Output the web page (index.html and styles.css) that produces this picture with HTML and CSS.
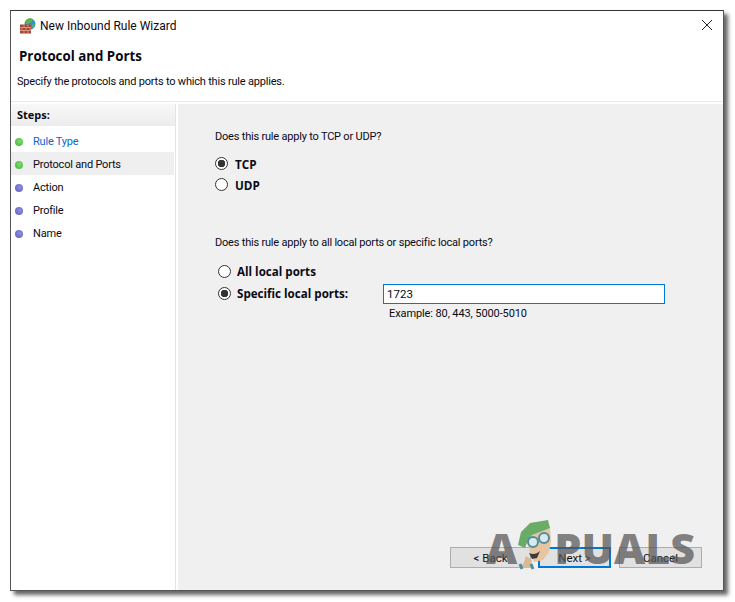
FILE: index.html
```html
<!DOCTYPE html>
<html lang="en">

<head>
    <meta charset="UTF-8">
    <title>New Inbound Rule Wizard</title>
    <link rel="stylesheet" href="styles.css">
</head>

<body>
    <div class="window">
        <div class="titlebar">
            <svg class="app-icon" width="16" height="16" viewBox="0 0 16 16">
                <circle cx="10" cy="6" r="5.500" fill="#2f8fd8" />
                <path d="M6 2c2-2 5-2 7-1l-1 3-3 1-1 2-2-1z" fill="#5fb548" />
                <path d="M12 7l3-1-1 3-2 1z" fill="#5fb548" />
                <rect x="0" y="6.500" width="11" height="9" fill="#a8442f" />
                <path d="M0 9.500h11M0 12.500h11M4 6.500v3M8 6.500v3M2 9.500v3M6 9.500v3M10 9.500v3M4 12.500v3M8 12.500v3" stroke="#dba794" stroke-width="0.800" fill="none" />
            </svg>
            <span class="title">New Inbound Rule Wizard</span>
            <svg class="close" width="12" height="12" viewBox="0 0 12 12">
                <path d="M1 1l10 10M11 1L1 11" stroke="#222" stroke-width="1" fill="none" />
            </svg>
        </div>
        <div class="header">
            <h1>Protocol and Ports</h1>
            <p>Specify the protocols and ports to which this rule applies.</p>
        </div>
        <div class="main">
            <div class="steps">
                <div class="steps-head">Steps:</div>
                <ul>
                    <li class="done link"><i></i>Rule Type</li>
                    <li class="done current"><i></i>Protocol and Ports</li>
                    <li><i></i>Action</li>
                    <li><i></i>Profile</li>
                    <li><i></i>Name</li>
                </ul>
            </div>
            <div class="content">
                <p class="question">Does this rule apply to TCP or UDP?</p>
                <div class="radio-group proto">
                    <div class="radio on"><i></i>TCP</div>
                    <div class="radio"><i></i>UDP</div>
                </div>
                <p class="question second">Does this rule apply to all local ports or specific local ports?</p>
                <div class="radio-group ports">
                    <div class="radio"><i></i>All local ports</div>
                    <div class="radio on"><i></i><span class="radio-label">Specific local ports:</span>
                        <div class="port-input">1723</div>
                    </div>
                </div>
                <p class="example">Example: 80, 443, 5000-5010</p>
                <div class="buttons">
                    <button class="btn-back">&lt; Back</button>
                    <button class="btn-next">Next &gt;</button>
                    <button class="btn-cancel">Cancel</button>
                </div>
            </div>
        </div>
        <div class="watermark">
            <span>A</span>
            <svg class="mascot" width="38" height="50" viewBox="0 0 38 50">
                <path d="M13 20l4-5 8-3 10-4 1 14-2 10-6 8-9 2-4-8z" fill="#e6c5a0" />
                <path d="M3 25L6 12 15 3 33 0l2 8-10 4-8 3-4 5-3 8z" fill="#6bab68" />
                <circle cx="18" cy="22" r="5" fill="#dce9ec" stroke="#4f8d9e" stroke-width="2" />
                <circle cx="29" cy="18" r="5" fill="#dce9ec" stroke="#4f8d9e" stroke-width="2" />
                <path d="M14 33c4 2 8 1 11-2l-3 7-5 1z" fill="#3b3b3b" />
                <path d="M11 36l6 4-1 8H6l3-6z" fill="#d8b994" />
                <path d="M5 44l2 5M16 44l2 5" stroke="#4f8d9e" stroke-width="3" fill="none" />
            </svg>
            <span>PUALS</span>
        </div>
    </div>
</body>

</html>
```

FILE: styles.css
```css
html,
body {
    margin: 0;
    padding: 0;
    height: 100%;
    background-color: white;
    overflow: hidden;
}

body {
    padding: 10px 0 0 10px;
    box-sizing: border-box;
    font-family: Roboto, sans-serif;
    font-size: 11px;
    letter-spacing: -0.2px;
    color: #0a0a14;
}

.window {
    position: relative;
    width: 714px;
    height: 581px;
    box-sizing: border-box;
    border: 1px solid #555;
    border-top-color: #333;
    background-color: white;
    box-shadow: 4px 4px 4px #666;
    display: flex;
    flex-direction: column;
}

.titlebar {
    height: 29px;
    display: flex;
    align-items: center;
    padding: 0 9px;
    box-sizing: border-box;
    gap: 4px;
    flex-shrink: 0;
}

.title {
    font-size: 12px;
    letter-spacing: 0;
    flex: 1;
}

.close {
    margin-right: 1px;
    margin-top: -2px;
}

.header {
    height: 62px;
    box-sizing: border-box;
    flex-shrink: 0;
    border-bottom: 1px solid #e8e8e8;
    padding: 7px 0 0 6px;
}

.header h1 {
    margin: 0 0 0 2px;
    font-family: "Open Sans", sans-serif;
    font-size: 13.3px;
    letter-spacing: 0;
    font-weight: bold;
    line-height: 18px;
}

.header p {
    margin: 9px 0 0;
    line-height: 16px;
}

.main {
    flex: 1;
    display: flex;
    padding-top: 2px;
    min-height: 0;
}

.steps {
    width: 164px;
    flex-shrink: 0;
    border-right: 1px solid #e4e4e4;
    margin-right: 2px;
}

.steps-head {
    height: 22px;
    line-height: 22px;
    padding-left: 6px;
    font-family: "Open Sans", sans-serif;
    font-size: 11px;
    letter-spacing: 0;
    font-weight: bold;
    background: linear-gradient(#f8f8f8, #ececec);
}

.steps ul {
    list-style: none;
    margin: 3px 0 0;
    padding: 0;
}

.steps li {
    height: 23px;
    box-sizing: border-box;
    display: flex;
    align-items: center;
    padding: 2px 0 0 4px;
    gap: 10px;
}

.steps li i {
    width: 8px;
    height: 8px;
    border-radius: 50%;
    background: radial-gradient(circle at 60% 40%, #8f8fe0, #5a5ab8);
}

.steps li.done i {
    background: radial-gradient(circle at 60% 40%, #7fdc6f, #3fae3a);
}

.steps li.link {
    color: #0a66d0;
}

.steps li.current {
    background-color: #efefef;
    margin-right: 1px;
}

.content {
    position: relative;
    flex: 1;
    background-color: #f0f0f0;
    padding: 25px 0 0 37px;
}

.question {
    margin: 0;
    line-height: 16px;
}

.radio-group {
    margin-top: 9px;
    display: flex;
    flex-direction: column;
}

.radio {
    height: 22px;
    display: flex;
    align-items: center;
    gap: 7px;
    font-family: "Open Sans", sans-serif;
    font-size: 11.7px;
    letter-spacing: 0;
    font-weight: bold;
}

.proto {
    margin-top: 8px;
}

.proto .radio {
    height: 21px;
}

.radio i {
    width: 11px;
    height: 11px;
    border: 1px solid #333;
    border-radius: 50%;
    background-color: white;
    flex-shrink: 0;
}

.radio.on i {
    background: radial-gradient(circle, #333 0, #333 3.5px, white 4px);
}

.question.second {
    margin-top: 40px;
}

.ports {
    margin-left: 3px;
}

.ports .radio {
    gap: 6px;
    font-size: 11.6px;
}

.radio-label {
    width: 147px;
}

.port-input {
    width: 277px;
    height: 18px;
    line-height: 18px;
    padding-left: 3px;
    border: 1px solid #0078d7;
    background-color: white;
    font-family: Roboto, sans-serif;
    font-size: 11.5px;
    font-weight: normal;
    margin: 1px 0 0 -7px;
}

.example {
    margin: 2px 0 0 174px;
    line-height: 16px;
    letter-spacing: -0.1px;
}

.buttons {
    position: absolute;
    right: 21px;
    bottom: 22px;
    display: flex;
}

.buttons button {
    height: 21px;
    box-sizing: border-box;
    font-family: inherit;
    font-size: 11.5px;
    letter-spacing: 0;
    color: #111;
    background-color: #e1e1e1;
    border: 1px solid #adadad;
    padding: 0;
}

.btn-back {
    width: 81px;
    margin-right: 7px;
}

.btn-next {
    width: 73px;
    margin-right: 8px;
    border: 2px solid #0078d7 !important;
}

.btn-cancel {
    width: 83px;
}

.watermark {
    position: absolute;
    left: 475px;
    top: 509px;
    height: 50px;
    display: flex;
    align-items: flex-end;
    font-family: "Open Sans", sans-serif;
    font-weight: 800;
    font-size: 43px;
    line-height: 50px;
    letter-spacing: 0;
    color: rgba(85, 85, 85, 0.72);
    pointer-events: none;
}

.watermark span {
    position: relative;
    top: 3px;
}

.mascot {
    margin-left: -2px;
    margin-right: 1px;
}
```
